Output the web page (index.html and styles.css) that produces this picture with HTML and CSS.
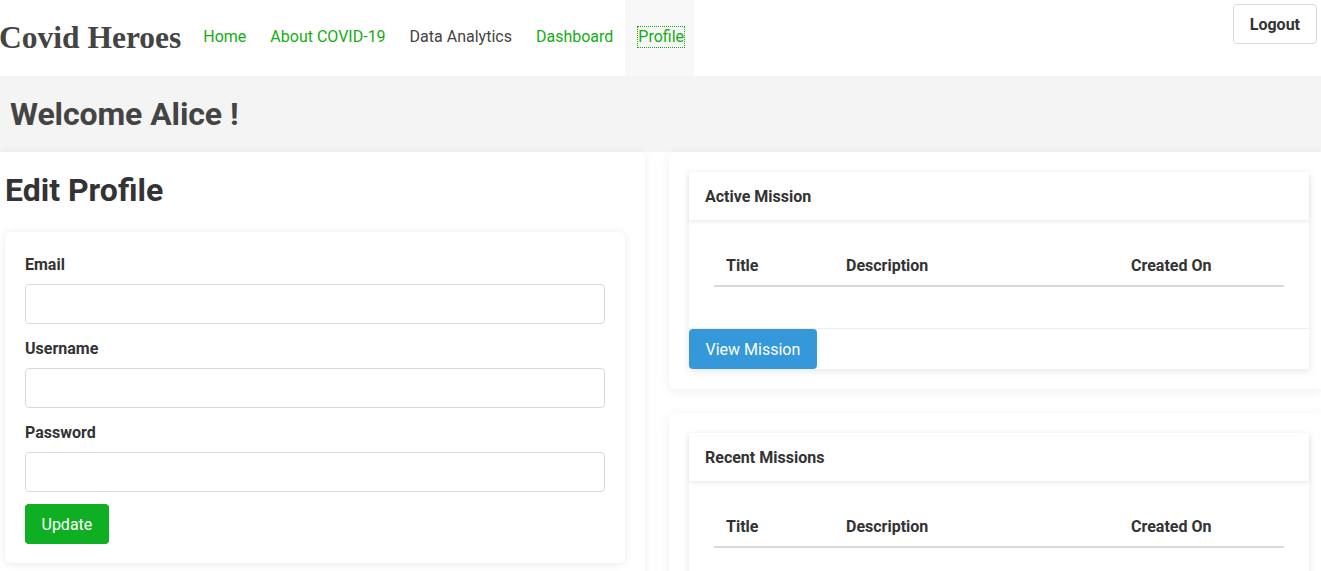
FILE: index.html
```html
<!DOCTYPE html>
<html lang="en">
<head>
<meta charset="utf-8">
<title>Covid Heroes - Profile</title>
<link rel="stylesheet" href="styles.css">
</head>
<body>
<nav class="topnav">
  <a class="brand" href="#">Covid Heroes</a>
  <ul class="links">
    <li><a class="link" href="#">Home</a></li>
    <li><a class="link" href="#">About COVID-19</a></li>
    <li><a class="link link-dark" href="#">Data Analytics</a></li>
    <li><a class="link" href="#">Dashboard</a></li>
    <li class="active"><a class="link focused" href="#">Profile</a></li>
  </ul>
  <button class="logout">Logout</button>
</nav>
<header class="welcome">
  <h1>Welcome Alice !</h1>
</header>
<main class="content">
  <section class="left-col">
    <h2 class="page-title">Edit Profile</h2>
    <form class="form-card">
      <div class="field">
        <label>Email</label>
        <input type="text">
      </div>
      <div class="field">
        <label>Username</label>
        <input type="text">
      </div>
      <div class="field last">
        <label>Password</label>
        <input type="password">
      </div>
      <button type="button" class="btn-green">Update</button>
    </form>
  </section>
  <section class="right-col">
    <div class="outer-card">
      <div class="inner-card">
        <div class="card-header">Active Mission</div>
        <div class="card-body">
          <table class="missions">
            <thead><tr><th class="c1">Title</th><th class="c2">Description</th><th class="c3">Created On</th></tr></thead>
            <tbody></tbody>
          </table>
        </div>
        <div class="card-footer"><button class="btn-blue">View Mission</button></div>
      </div>
    </div>
    <div class="outer-card">
      <div class="inner-card">
        <div class="card-header">Recent Missions</div>
        <div class="card-body">
          <table class="missions">
            <thead><tr><th class="c1">Title</th><th class="c2">Description</th><th class="c3">Created On</th></tr></thead>
            <tbody></tbody>
          </table>
        </div>
      </div>
    </div>
  </section>
</main>
</body>
</html>
```

FILE: styles.css
```css
* { box-sizing: border-box; }
html, body { margin: 0; padding: 0; background: #fff; overflow: hidden; }
body { font-family: Roboto, "Liberation Sans", Arial, sans-serif; color: #333; font-size: 16px; }

.topnav {
  display: flex;
  align-items: center;
  height: 76px;
  background: #fff;
}
.brand {
  font-family: "Liberation Serif", "Times New Roman", serif;
  font-weight: bold;
  font-size: 31.5px;
  color: #444;
  text-decoration: none;
  margin: 0 10px 0 -1px;
  line-height: 74px;
}
.links {
  display: flex;
  list-style: none;
  margin: 0;
  padding: 0;
  height: 76px;
}
.links li { display: flex; align-items: center; padding: 0 12px 2px; }
.links li.active { background: #f8f8f8; padding: 0 10px 2px 13px; }
.link {
  color: #13ad13;
  text-decoration: none;
  font-size: 16px;
  line-height: 20px;
}
.link-dark { color: #444; }
.focused { outline: 1px dotted #13ad13; }

.logout {
  margin-left: auto;
  align-self: flex-start;
  margin-top: 4px;
  margin-right: 4px;
  height: 40px;
  padding: 0 16px;
  background: #fff;
  border: 1px solid #d9d9d9;
  border-radius: 4px;
  font-family: Roboto, sans-serif;
  font-weight: bold;
  font-size: 16px;
  color: #333;
}

.welcome {
  background: #f4f4f4;
  height: 76px;
  display: flex;
  align-items: center;
  padding-left: 10px;
}
.welcome h1 {
  margin: 0;
  font-size: 32px;
  line-height: 38px;
  color: #444;
  font-weight: bold;
  letter-spacing: -0.1px;
}

.content {
  display: flex;
  gap: 24px;
  align-items: flex-start;
}
.left-col {
  width: 645px;
  flex: none;
  padding: 0 20px 40px 5px;
  background: #fff;
  border-radius: 0 6px 6px 0;
  box-shadow: 0 0 10px rgba(0,0,0,0.06);
  min-height: 430px;
}
.page-title {
  margin: 20px 0 23px;
  font-size: 32px;
  line-height: 37px;
  font-weight: bold;
  color: #333;
}
.form-card {
  background: #fff;
  border-radius: 6px;
  box-shadow: 0 1px 8px rgba(0,0,0,0.09);
  padding: 22px 20px 19px;
}
.field { margin-bottom: 14px; }
.field.last { margin-bottom: 12px; }
.field label {
  display: block;
  font-weight: bold;
  font-size: 16px;
  line-height: 20px;
  padding-top: 1px;
  margin-bottom: 9px;
  color: #333;
}
.field input {
  display: block;
  width: 100%;
  height: 40px;
  border: 1px solid #d9d9d9;
  border-radius: 4px;
  background: #fff;
  font-size: 16px;
  padding: 0 10px;
}
.btn-green {
  height: 40px;
  padding: 0 16.5px;
  border: none;
  border-radius: 4px;
  background: #0eaf22;
  color: #fff;
  font-family: Roboto, sans-serif;
  font-size: 16px;
}

.right-col {
  flex: 1;
  display: flex;
  flex-direction: column;
  gap: 24px;
}
.outer-card {
  background: #fff;
  border-radius: 6px 0 0 6px;
  box-shadow: 0 2px 12px rgba(0,0,0,0.07);
  padding: 20px 12px 20px 20px;
}
.inner-card {
  background: #fff;
  box-shadow: 0 2px 8px rgba(0,0,0,0.1);
}
.card-header {
  height: 48px;
  display: flex;
  align-items: center;
  padding-left: 16px;
  font-weight: bold;
  font-size: 16px;
  color: #333;
  box-shadow: 0 2px 4px rgba(0,0,0,0.08);
  position: relative;
}
.card-body { padding: 23px 25px 41px; }
.missions {
  width: 100%;
  border-collapse: collapse;
}
.missions th {
  text-align: left;
  font-weight: bold;
  font-size: 16px;
  line-height: 20px;
  padding: 13px 12px 9px;
  border-bottom: 2px solid #d9d9d9;
  color: #333;
}
.missions .c1 { width: 120px; }
.missions .c3 { width: 165px; }
.card-footer {
  border-top: 1px solid #eee;
  display: flex;
}
.btn-blue {
  height: 40px;
  padding: 0 16.5px;
  border: none;
  border-radius: 4px;
  background: #3498db;
  color: #fff;
  font-family: Roboto, sans-serif;
  font-size: 16px;
}
```
